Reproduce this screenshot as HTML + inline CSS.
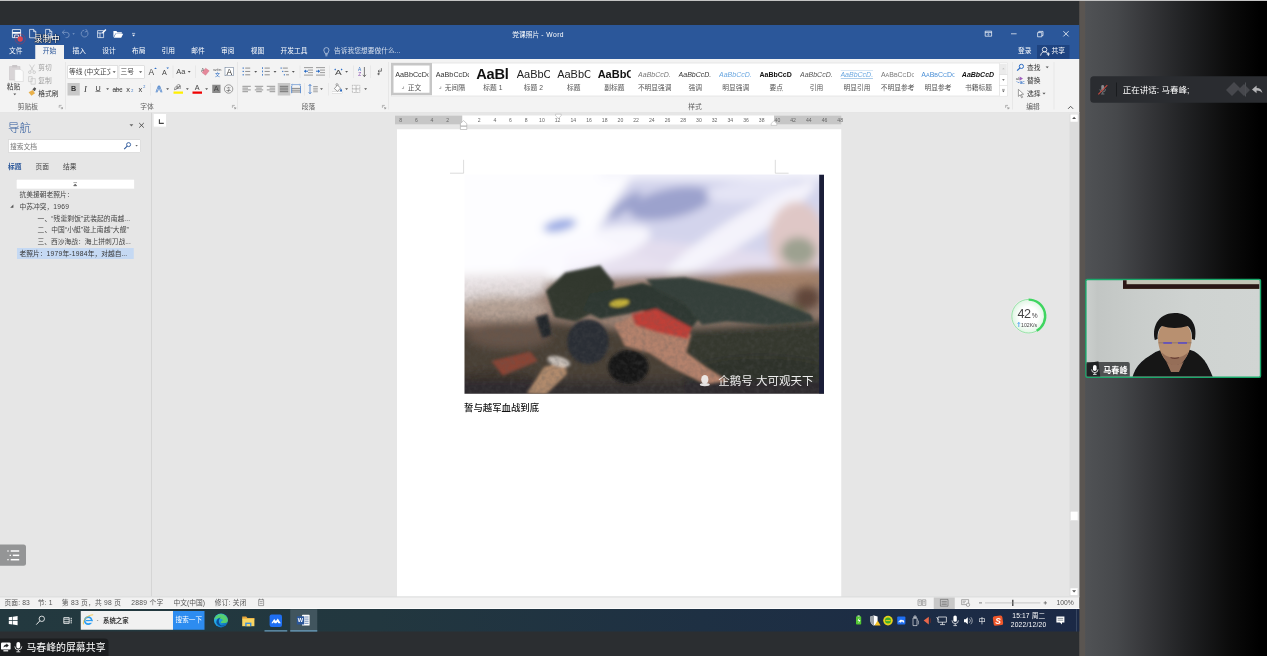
<!DOCTYPE html>
<html lang="zh-CN"><head><meta charset="utf-8"><title>Word</title>
<style>
html,body{margin:0;padding:0;background:#2b2e31;overflow:hidden}
body{width:1267px;height:656px;position:relative}
#s{position:absolute;left:0;top:0;width:5068px;height:2624px;transform:scale(0.25);transform-origin:0 0;overflow:hidden;font-family:"Liberation Sans","Noto Sans CJK SC",sans-serif;}
#s div{position:absolute;box-sizing:border-box}
#s .t{white-space:nowrap}
#s small{font-size:78%}
#s svg.ov{position:absolute;left:0;top:0;width:5068px;height:2624px}
svg text{font-family:"Liberation Sans","Noto Sans CJK SC",sans-serif}
</style></head><body><div id="s">
<div style="left:0px;top:0px;width:5068px;height:2624px;background:#2b2e31"></div>
<div style="left:4316.8px;top:0px;width:751.2px;height:2624px;background:linear-gradient(90deg,#5a5551 0,#5a5551 2.9%,#505255 3.4%,#46484b 20%,#38393c 34%,#212224 56%,#0b0b0b 80%,#000 96%)"></div>
<div style="left:0px;top:0px;width:5068px;height:4.4px;background:#c4c4c4"></div>
<div style="left:0px;top:100px;width:4316.8px;height:136px;background:#2b579a"></div>
<div style="left:0px;top:236px;width:4316.8px;height:218px;background:#f3f3f3"></div>
<div style="left:0px;top:449.2px;width:4316.8px;height:1938px;background:#e6e6e6"></div>
<div style="left:0px;top:447.6px;width:4316.8px;height:2.8px;background:#e0e0e0"></div>
<div style="left:0px;top:2384.8px;width:4316.8px;height:51.6px;background:#f2f2f2"></div>
<div style="left:0px;top:2384.8px;width:4316.8px;height:4.8px;background:#dedede"></div>
<div style="left:0px;top:2432px;width:4316.8px;height:4.2px;background:#fbfbfb"></div>
<div style="left:0px;top:2436px;width:4316.8px;height:90.4px;background:linear-gradient(90deg,#23393f 0,#22373f 35%,#1e3043 65%,#1b2946 100%)"></div>
<div style="left:1587.6px;top:517.2px;width:1777.6px;height:1868px;background:#fff"></div>
<div style="left:604px;top:451.2px;width:2.4px;height:1933.6px;background:#c4c4c4"></div>
<div style="left:140.6px;top:179.6px;width:115.4px;height:57.2px;background:#f3f3f3"></div>
<div class="t" style="left:36px;top:184.38px;font-size:26.96px;line-height:40.44px;color:#fff;">文件</div>
<div class="t" style="left:290px;top:184.38px;font-size:26.96px;line-height:40.44px;color:#fff;">插入</div>
<div class="t" style="left:409.2px;top:184.38px;font-size:26.96px;line-height:40.44px;color:#fff;">设计</div>
<div class="t" style="left:528px;top:184.38px;font-size:26.96px;line-height:40.44px;color:#fff;">布局</div>
<div class="t" style="left:646.4px;top:184.38px;font-size:26.96px;line-height:40.44px;color:#fff;">引用</div>
<div class="t" style="left:765.2px;top:184.38px;font-size:26.96px;line-height:40.44px;color:#fff;">邮件</div>
<div class="t" style="left:884px;top:184.38px;font-size:26.96px;line-height:40.44px;color:#fff;">审阅</div>
<div class="t" style="left:1003.2px;top:184.38px;font-size:26.96px;line-height:40.44px;color:#fff;">视图</div>
<div class="t" style="left:1122.4px;top:184.38px;font-size:26.96px;line-height:40.44px;color:#fff;">开发工具</div>
<div class="t" style="left:170.8px;top:184.38px;font-size:26.96px;line-height:40.44px;color:#2b579a;">开始</div>
<div class="t" style="left:1336px;top:184.38px;font-size:26.96px;line-height:40.44px;color:#d5deec;">告诉我您想要做什么...</div>
<div class="t" style="left:2049.2px;top:117.38px;font-size:26.96px;line-height:40.44px;color:#fff;">党课照片 <span style='letter-spacing:1.9px'>- Word</span></div>
<div class="t" style="left:4072px;top:184.38px;font-size:26.96px;line-height:40.44px;color:#fff;">登录</div>
<div style="left:4148px;top:180px;width:130.4px;height:55.2px;background:#1e4380"></div>
<div class="t" style="left:4206px;top:184.38px;font-size:26.96px;line-height:40.44px;color:#fff;">共享</div>
<div class="t" style="left:136px;top:131px;font-size:34.4px;line-height:51.6px;color:#fff;text-shadow:0 0 3px #000,0 0 5px rgba(0,0,0,.8),1px 1px 3px #000;">录制中</div>
<div class="t" style="left:27.2px;top:324.58px;font-size:26.96px;line-height:40.44px;color:#333;">粘贴</div>
<div class="t" style="left:153.2px;top:250.18px;font-size:26.96px;line-height:40.44px;color:#a0a0a0;">剪切</div>
<div class="t" style="left:153.2px;top:302.18px;font-size:26.96px;line-height:40.44px;color:#a0a0a0;">复制</div>
<div class="t" style="left:153.2px;top:353.78px;font-size:26.96px;line-height:40.44px;color:#333;">格式刷</div>
<div class="t" style="left:71.2px;top:404.98px;font-size:26.96px;line-height:40.44px;color:#5e5e5e;">剪贴板</div>
<div class="t" style="left:560.8px;top:404.98px;font-size:26.96px;line-height:40.44px;color:#5e5e5e;">字体</div>
<div class="t" style="left:1207.2px;top:404.98px;font-size:26.96px;line-height:40.44px;color:#5e5e5e;">段落</div>
<div class="t" style="left:2752.8px;top:404.98px;font-size:26.96px;line-height:40.44px;color:#5e5e5e;">样式</div>
<div class="t" style="left:4105.2px;top:404.98px;font-size:26.96px;line-height:40.44px;color:#5e5e5e;">编辑</div>
<div style="left:262.4px;top:248px;width:2px;height:190px;background:#dadada"></div>
<div style="left:950.4px;top:248px;width:2px;height:190px;background:#dadada"></div>
<div style="left:1552px;top:248px;width:2px;height:190px;background:#dadada"></div>
<div style="left:4048.8px;top:248px;width:2px;height:190px;background:#dadada"></div>
<div style="left:4215.2px;top:248px;width:2px;height:190px;background:#dadada"></div>
<div style="left:690.8px;top:262px;width:2px;height:50px;background:#dcdcdc"></div>
<div style="left:782px;top:262px;width:2px;height:50px;background:#dcdcdc"></div>
<div style="left:1198.8px;top:262px;width:2px;height:50px;background:#dcdcdc"></div>
<div style="left:1318px;top:262px;width:2px;height:50px;background:#dcdcdc"></div>
<div style="left:1413.2px;top:262px;width:2px;height:50px;background:#dcdcdc"></div>
<div style="left:1481.2px;top:262px;width:2px;height:50px;background:#dcdcdc"></div>
<div style="left:600px;top:332px;width:2px;height:50px;background:#dcdcdc"></div>
<div style="left:1218.4px;top:332px;width:2px;height:50px;background:#dcdcdc"></div>
<div style="left:1314px;top:332px;width:2px;height:50px;background:#dcdcdc"></div>
<div style="left:269.6px;top:262.4px;width:202.4px;height:51.2px;background:#fff;border:2px solid #c8c8c8"></div>
<div style="left:475.2px;top:262.4px;width:102.8px;height:51.2px;background:#fff;border:2px solid #c8c8c8"></div>
<div class="t" style="left:276px;top:266.4px;width:165.2px;height:44px;overflow:hidden;font-size:26.96px;line-height:42.4px;color:#444">等线 (中文正文)</div>
<div class="t" style="left:482px;top:267.38px;font-size:26.96px;line-height:40.44px;color:#444;">三号</div>
<div style="left:269.6px;top:332px;width:49.6px;height:50.4px;background:#c8c8c8"></div>
<div style="left:1111.2px;top:332px;width:49.6px;height:50.4px;background:#c8c8c8"></div>
<div class="t" style="left:294.4px;top:334.4px;font-size:28.8px;line-height:43.2px;color:#333;transform:translateX(-50%);font-weight:bold">B</div>
<div class="t" style="left:341.6px;top:330.2px;font-size:34.4px;line-height:51.6px;color:#333;transform:translateX(-50%);font-style:italic;font-family:'Liberation Serif',serif">I</div>
<div class="t" style="left:392px;top:333.2px;font-size:28.8px;line-height:43.2px;color:#333;transform:translateX(-50%);text-decoration:underline;text-underline-offset:2px">U</div>
<div class="t" style="left:469.2px;top:338px;font-size:25.6px;line-height:38.4px;color:#444;transform:translateX(-50%);text-decoration:line-through;letter-spacing:-1px">abc</div>
<div class="t" style="left:512.8px;top:333.8px;font-size:29.6px;line-height:44.4px;color:#333;transform:translateX(-50%);">x</div>
<div class="t" style="left:528.8px;top:353.4px;font-size:15.2px;line-height:22.8px;color:#2b6cc4;transform:translateX(-50%);">2</div>
<div class="t" style="left:561.6px;top:333.8px;font-size:29.6px;line-height:44.4px;color:#333;transform:translateX(-50%);">x</div>
<div class="t" style="left:577.6px;top:335px;font-size:15.2px;line-height:22.8px;color:#2b6cc4;transform:translateX(-50%);">2</div>
<div class="t" style="left:605.2px;top:263.2px;font-size:33.6px;line-height:50.4px;color:#444;transform:translateX(-50%);">A</div>
<div class="t" style="left:657.6px;top:268.4px;font-size:28.8px;line-height:43.2px;color:#444;transform:translateX(-50%);">A</div>
<div class="t" style="left:705.2px;top:264.6px;font-size:29.6px;line-height:44.4px;color:#444;">Aa</div>
<div class="t" style="left:4108px;top:250.58px;font-size:26.96px;line-height:40.44px;color:#333;">查找</div>
<div class="t" style="left:4108px;top:303.38px;font-size:26.96px;line-height:40.44px;color:#333;">替换</div>
<div class="t" style="left:4108px;top:354.58px;font-size:26.96px;line-height:40.44px;color:#333;">选择</div>
<div class="t" style="left:636px;top:329px;font-size:36px;line-height:54px;color:#f3f3f3;transform:translateX(-50%);-webkit-text-stroke:2.4px #3b78c8;font-weight:bold">A</div>
<div style="left:694.4px;top:366.4px;width:37.6px;height:8.8px;background:#ffef00"></div>
<div class="t" style="left:714.4px;top:335.8px;font-size:18.4px;line-height:27.6px;color:#555;transform:translateX(-50%);font-style:italic">ab</div>
<div class="t" style="left:788.8px;top:328.8px;font-size:28.8px;line-height:43.2px;color:#444;transform:translateX(-50%);">A</div>
<div style="left:770.4px;top:366.4px;width:37.6px;height:8.8px;background:#f00000"></div>
<div style="left:848.8px;top:339.2px;width:32.8px;height:32.8px;background:#8a8a8a"></div>
<div class="t" style="left:865.2px;top:333.4px;font-size:29.6px;line-height:44.4px;color:#444;transform:translateX(-50%);">A</div>
<div class="t" style="left:914.4px;top:341px;font-size:20px;line-height:30px;color:#444;transform:translateX(-50%);">字</div>
<div class="t" style="left:811.2px;top:264.8px;font-size:20.8px;line-height:31.2px;color:#555;transform:translateX(-50%);">A</div>
<div class="t" style="left:869.6px;top:281.8px;font-size:20px;line-height:30px;color:#2b6cc4;transform:translateX(-50%);">文</div>
<div class="t" style="left:869.6px;top:263.2px;font-size:17.6px;line-height:26.4px;color:#555;transform:translateX(-50%);">wén</div>
<div style="left:899.2px;top:268.8px;width:35.2px;height:35.2px;border:2px solid #5a6f8a;background:#fff"></div>
<div class="t" style="left:916.8px;top:262.4px;font-size:33.6px;line-height:50.4px;color:#333;transform:translateX(-50%);">A</div>
<div class="t" style="left:1353.2px;top:267px;font-size:29.6px;line-height:44.4px;color:#444;transform:translateX(-50%);transform:translateX(-50%) scaleX(1.35)">A</div>
<div class="t" style="left:1438.4px;top:262.8px;font-size:19.2px;line-height:28.8px;color:#2b6cc4;transform:translateX(-50%);">A</div>
<div class="t" style="left:1438.4px;top:282.8px;font-size:19.2px;line-height:28.8px;color:#8a4fb0;transform:translateX(-50%);">Z</div>
<div style="left:1330.4px;top:367.2px;width:38.4px;height:8px;background:#fff;border:1.6px solid #999"></div>
<div style="left:1564.8px;top:251.2px;width:2465.6px;height:133.6px;background:#fff;border:2px solid #d0d0d0"></div>
<div style="left:1564.4px;top:252.4px;width:163.6px;height:128.4px;border:10.8px solid #c6c6c6;background:#fff"></div>
<div class="t" style="left:1581.2px;top:267.2px;width:132.8px;height:64px;overflow:hidden;font-size:28.8px;line-height:64px;color:#333;;font-family:"Liberation Sans",sans-serif">AaBbCcDc</div>
<div class="t" style="left:1657.73px;top:330.58px;font-size:26.96px;line-height:40.44px;color:#555;transform:translateX(-50%);">正文</div>
<div class="t" style="left:1743.07px;top:267.2px;width:132.8px;height:64px;overflow:hidden;font-size:28.8px;line-height:64px;color:#333;;font-family:"Liberation Sans",sans-serif">AaBbCcDc</div>
<div class="t" style="left:1819.6px;top:330.58px;font-size:26.96px;line-height:40.44px;color:#555;transform:translateX(-50%);">无间隔</div>
<div class="t" style="left:1904.93px;top:261.6px;width:132.8px;height:64px;overflow:hidden;font-size:58.4px;line-height:64px;color:#111;font-weight:bold;letter-spacing:-1px;font-family:"Liberation Sans",sans-serif">AaBl</div>
<div class="t" style="left:1971.47px;top:330.58px;font-size:26.96px;line-height:40.44px;color:#555;transform:translateX(-50%);">标题 1</div>
<div class="t" style="left:2066.8px;top:264.8px;width:132.8px;height:64px;overflow:hidden;font-size:44px;line-height:64px;color:#222;;font-family:"Liberation Sans",sans-serif">AaBbC</div>
<div class="t" style="left:2133.33px;top:330.58px;font-size:26.96px;line-height:40.44px;color:#555;transform:translateX(-50%);">标题 2</div>
<div class="t" style="left:2228.67px;top:264.8px;width:132.8px;height:64px;overflow:hidden;font-size:44px;line-height:64px;color:#222;;font-family:"Liberation Sans",sans-serif">AaBbC</div>
<div class="t" style="left:2295.2px;top:330.58px;font-size:26.96px;line-height:40.44px;color:#555;transform:translateX(-50%);">标题</div>
<div class="t" style="left:2390.53px;top:264.8px;width:132.8px;height:64px;overflow:hidden;font-size:44px;line-height:64px;color:#111;font-weight:bold;font-family:"Liberation Sans",sans-serif">AaBbC</div>
<div class="t" style="left:2457.07px;top:330.58px;font-size:26.96px;line-height:40.44px;color:#555;transform:translateX(-50%);">副标题</div>
<div class="t" style="left:2552.4px;top:267.2px;width:132.8px;height:64px;overflow:hidden;font-size:28px;line-height:64px;color:#777;font-style:italic;font-family:"Liberation Sans",sans-serif">AaBbCcD.</div>
<div class="t" style="left:2618.93px;top:330.58px;font-size:26.96px;line-height:40.44px;color:#555;transform:translateX(-50%);">不明显强调</div>
<div class="t" style="left:2714.27px;top:267.2px;width:132.8px;height:64px;overflow:hidden;font-size:28px;line-height:64px;color:#333;font-style:italic;font-family:"Liberation Sans",sans-serif">AaBbCcD.</div>
<div class="t" style="left:2780.8px;top:330.58px;font-size:26.96px;line-height:40.44px;color:#555;transform:translateX(-50%);">强调</div>
<div class="t" style="left:2876.13px;top:267.2px;width:132.8px;height:64px;overflow:hidden;font-size:28px;line-height:64px;color:#6aa7e0;font-style:italic;font-family:"Liberation Sans",sans-serif">AaBbCcD.</div>
<div class="t" style="left:2942.67px;top:330.58px;font-size:26.96px;line-height:40.44px;color:#555;transform:translateX(-50%);">明显强调</div>
<div class="t" style="left:3038px;top:267.2px;width:132.8px;height:64px;overflow:hidden;font-size:28px;line-height:64px;color:#111;font-weight:bold;font-family:"Liberation Sans",sans-serif">AaBbCcD</div>
<div class="t" style="left:3104.53px;top:330.58px;font-size:26.96px;line-height:40.44px;color:#555;transform:translateX(-50%);">要点</div>
<div class="t" style="left:3199.87px;top:267.2px;width:132.8px;height:64px;overflow:hidden;font-size:28px;line-height:64px;color:#555;font-style:italic;font-family:"Liberation Sans",sans-serif">AaBbCcD.</div>
<div class="t" style="left:3266.4px;top:330.58px;font-size:26.96px;line-height:40.44px;color:#555;transform:translateX(-50%);">引用</div>
<div class="t" style="left:3361.73px;top:267.2px;width:132.8px;height:64px;overflow:hidden;font-size:28px;line-height:64px;color:#6aa7e0;font-style:italic;font-family:"Liberation Sans",sans-serif">AaBbCcD.</div>
<div class="t" style="left:3428.27px;top:330.58px;font-size:26.96px;line-height:40.44px;color:#555;transform:translateX(-50%);">明显引用</div>
<div class="t" style="left:3523.6px;top:267.2px;width:132.8px;height:64px;overflow:hidden;font-size:28px;line-height:64px;color:#777;;font-family:"Liberation Sans",sans-serif">A<small>A</small>B<small>B</small>C<small>C</small>D<small>C</small></div>
<div class="t" style="left:3590.13px;top:330.58px;font-size:26.96px;line-height:40.44px;color:#555;transform:translateX(-50%);">不明显参考</div>
<div class="t" style="left:3685.47px;top:267.2px;width:132.8px;height:64px;overflow:hidden;font-size:28px;line-height:64px;color:#4a8fd6;;font-family:"Liberation Sans",sans-serif">A<small>A</small>B<small>B</small>C<small>C</small>D<small>C</small></div>
<div class="t" style="left:3752px;top:330.58px;font-size:26.96px;line-height:40.44px;color:#555;transform:translateX(-50%);">明显参考</div>
<div class="t" style="left:3847.33px;top:267.2px;width:132.8px;height:64px;overflow:hidden;font-size:28px;line-height:64px;color:#111;font-weight:bold;font-style:italic;font-family:"Liberation Sans",sans-serif">AaBbCcD</div>
<div class="t" style="left:3913.87px;top:330.58px;font-size:26.96px;line-height:40.44px;color:#555;transform:translateX(-50%);">书籍标题</div>
<div style="left:3362.53px;top:280.8px;width:129.87px;height:1.6px;background:#5b9bd5"></div>
<div style="left:3362.53px;top:314.4px;width:129.87px;height:1.6px;background:#5b9bd5"></div>
<div style="left:3996.8px;top:252.8px;width:32px;height:130.4px;background:#fff;border-left:2px solid #d0d0d0"></div>
<div style="left:3999.2px;top:255.2px;width:28px;height:42.4px;background:#ebebeb"></div>
<div style="left:3996.8px;top:297.6px;width:32px;height:2px;background:#d0d0d0"></div>
<div style="left:3996.8px;top:340.8px;width:32px;height:2px;background:#d0d0d0"></div>
<div class="t" style="left:4072.8px;top:302px;font-size:17.6px;line-height:26.4px;color:#555;transform:translateX(-50%);">ab</div>
<div class="t" style="left:4088.8px;top:317.4px;font-size:18.4px;line-height:27.6px;color:#2b6cc4;transform:translateX(-50%);">ac</div>
<div style="left:1580.4px;top:461.6px;width:1786px;height:36.8px;background:#fff"></div>
<div style="left:1580.4px;top:461.6px;width:268.4px;height:36.8px;background:#c6c6c6"></div>
<div style="left:3096px;top:461.6px;width:270.4px;height:36.8px;background:#c6c6c6"></div>
<div class="t" style="left:1602.4px;top:465.5px;font-size:20.4px;line-height:30.6px;color:#666;transform:translateX(-50%);">8</div>
<div class="t" style="left:1665.2px;top:465.5px;font-size:20.4px;line-height:30.6px;color:#666;transform:translateX(-50%);">6</div>
<div class="t" style="left:1728px;top:465.5px;font-size:20.4px;line-height:30.6px;color:#666;transform:translateX(-50%);">4</div>
<div class="t" style="left:1790.8px;top:465.5px;font-size:20.4px;line-height:30.6px;color:#666;transform:translateX(-50%);">2</div>
<div class="t" style="left:1916.4px;top:465.5px;font-size:20.4px;line-height:30.6px;color:#666;transform:translateX(-50%);">2</div>
<div class="t" style="left:1979.2px;top:465.5px;font-size:20.4px;line-height:30.6px;color:#666;transform:translateX(-50%);">4</div>
<div class="t" style="left:2042px;top:465.5px;font-size:20.4px;line-height:30.6px;color:#666;transform:translateX(-50%);">6</div>
<div class="t" style="left:2104.8px;top:465.5px;font-size:20.4px;line-height:30.6px;color:#666;transform:translateX(-50%);">8</div>
<div class="t" style="left:2167.6px;top:465.5px;font-size:20.4px;line-height:30.6px;color:#666;transform:translateX(-50%);">10</div>
<div class="t" style="left:2230.4px;top:465.5px;font-size:20.4px;line-height:30.6px;color:#666;transform:translateX(-50%);">12</div>
<div class="t" style="left:2293.2px;top:465.5px;font-size:20.4px;line-height:30.6px;color:#666;transform:translateX(-50%);">14</div>
<div class="t" style="left:2356px;top:465.5px;font-size:20.4px;line-height:30.6px;color:#666;transform:translateX(-50%);">16</div>
<div class="t" style="left:2418.8px;top:465.5px;font-size:20.4px;line-height:30.6px;color:#666;transform:translateX(-50%);">18</div>
<div class="t" style="left:2481.6px;top:465.5px;font-size:20.4px;line-height:30.6px;color:#666;transform:translateX(-50%);">20</div>
<div class="t" style="left:2544.4px;top:465.5px;font-size:20.4px;line-height:30.6px;color:#666;transform:translateX(-50%);">22</div>
<div class="t" style="left:2607.2px;top:465.5px;font-size:20.4px;line-height:30.6px;color:#666;transform:translateX(-50%);">24</div>
<div class="t" style="left:2670px;top:465.5px;font-size:20.4px;line-height:30.6px;color:#666;transform:translateX(-50%);">26</div>
<div class="t" style="left:2732.8px;top:465.5px;font-size:20.4px;line-height:30.6px;color:#666;transform:translateX(-50%);">28</div>
<div class="t" style="left:2795.6px;top:465.5px;font-size:20.4px;line-height:30.6px;color:#666;transform:translateX(-50%);">30</div>
<div class="t" style="left:2858.4px;top:465.5px;font-size:20.4px;line-height:30.6px;color:#666;transform:translateX(-50%);">32</div>
<div class="t" style="left:2921.2px;top:465.5px;font-size:20.4px;line-height:30.6px;color:#666;transform:translateX(-50%);">34</div>
<div class="t" style="left:2984px;top:465.5px;font-size:20.4px;line-height:30.6px;color:#666;transform:translateX(-50%);">36</div>
<div class="t" style="left:3046.8px;top:465.5px;font-size:20.4px;line-height:30.6px;color:#666;transform:translateX(-50%);">38</div>
<div class="t" style="left:3109.6px;top:465.5px;font-size:20.4px;line-height:30.6px;color:#666;transform:translateX(-50%);">40</div>
<div class="t" style="left:3172.4px;top:465.5px;font-size:20.4px;line-height:30.6px;color:#666;transform:translateX(-50%);">42</div>
<div class="t" style="left:3235.2px;top:465.5px;font-size:20.4px;line-height:30.6px;color:#666;transform:translateX(-50%);">44</div>
<div class="t" style="left:3298px;top:465.5px;font-size:20.4px;line-height:30.6px;color:#666;transform:translateX(-50%);">46</div>
<div class="t" style="left:3360.8px;top:465.5px;font-size:20.4px;line-height:30.6px;color:#666;transform:translateX(-50%);">48</div>
<div style="left:612px;top:454px;width:53.6px;height:55.2px;background:#fff;border:2px solid #dcdcdc"></div>
<div class="t" style="left:32px;top:477px;font-size:45.6px;line-height:68.4px;color:#2b579a;font-weight:300">导航</div>
<div style="left:32.8px;top:557.6px;width:530.4px;height:53.6px;background:#fff;border:2px solid #c6c6c6"></div>
<div class="t" style="left:40px;top:564.58px;font-size:26.96px;line-height:40.44px;color:#777;">搜索文档</div>
<div class="t" style="left:32px;top:647.38px;font-size:26.96px;line-height:40.44px;color:#2b579a;font-weight:bold">标题</div>
<div class="t" style="left:142.4px;top:647.38px;font-size:26.96px;line-height:40.44px;color:#444;">页面</div>
<div class="t" style="left:252px;top:647.38px;font-size:26.96px;line-height:40.44px;color:#444;">结果</div>
<div style="left:66.4px;top:718.4px;width:470.4px;height:37.6px;background:#fff;border:1.5px solid #dedede"></div>
<div style="left:68px;top:992px;width:467.2px;height:44px;background:#c5d9f3"></div>
<div class="t" style="left:78.4px;top:758.18px;font-size:26.96px;line-height:40.44px;color:#444;">抗美援朝老照片：</div>
<div class="t" style="left:78.4px;top:804.98px;font-size:26.96px;line-height:40.44px;color:#444;">中苏冲突，<span style='letter-spacing:1px'>1969</span></div>
<div class="t" style="left:150.4px;top:852.58px;font-size:26.96px;line-height:40.44px;color:#444;letter-spacing:0.4px">一、“残羹剩饭”武装起的南越...</div>
<div class="t" style="left:150.4px;top:899.38px;font-size:26.96px;line-height:40.44px;color:#444;letter-spacing:0.35px">二、中国“小艇”碰上南越“大舰”</div>
<div class="t" style="left:150.4px;top:946.18px;font-size:26.96px;line-height:40.44px;color:#444;">三、西沙海战：海上拼刺刀战...</div>
<div class="t" style="left:78.4px;top:994.18px;font-size:26.96px;line-height:40.44px;color:#333;">老照片：<span style='letter-spacing:1px'>1979</span>年<span style='letter-spacing:1px'>-1984</span>年，对越自...</div>
<div style="left:-16px;top:2177.6px;width:120.4px;height:85.6px;background:#949596;border-radius:10px"></div>
<div style="left:4277.6px;top:456px;width:39.2px;height:1928.8px;background:#dcdcdc"></div>
<div style="left:4280.8px;top:456.8px;width:31.2px;height:31.2px;background:#fff;border:1px solid #d8d8d8"></div>
<div style="left:4281.2px;top:2352px;width:30px;height:28.8px;background:#fff;border:1px solid #d8d8d8"></div>
<div style="left:4280px;top:2044px;width:32.8px;height:39.2px;background:#fff;border:2.4px solid #d4d4d4"></div>
<div class="t" style="left:17.6px;top:2389.38px;font-size:26.96px;line-height:40.44px;color:#555;letter-spacing:0.6px">页面: 83</div>
<div class="t" style="left:151.2px;top:2389.38px;font-size:26.96px;line-height:40.44px;color:#555;letter-spacing:0.6px">节: 1</div>
<div class="t" style="left:247.2px;top:2389.38px;font-size:26.96px;line-height:40.44px;color:#555;letter-spacing:1px">第 83 页，共 98 页</div>
<div class="t" style="left:524.8px;top:2389.38px;font-size:26.96px;line-height:40.44px;color:#555;letter-spacing:1.1px">2889 个字</div>
<div class="t" style="left:694.4px;top:2389.38px;font-size:26.96px;line-height:40.44px;color:#555;">中文(中国)</div>
<div class="t" style="left:859.2px;top:2389.38px;font-size:26.96px;line-height:40.44px;color:#555;letter-spacing:0.7px">修订: 关闭</div>
<div style="left:3735.2px;top:2390.4px;width:84px;height:45.6px;background:#c8c8c8"></div>
<div style="left:4047.6px;top:2399.2px;width:6.8px;height:24.8px;background:#555"></div>
<div class="t" style="left:4226.4px;top:2390.58px;font-size:26.96px;line-height:40.44px;color:#555;">100%</div>
<div style="left:323.2px;top:2444px;width:368.8px;height:75.2px;background:#f1f1f1"></div>
<div style="left:692px;top:2444px;width:126.4px;height:75.2px;background:#2d8cf0"></div>
<div class="t" style="left:702.4px;top:2461.4px;font-size:26.4px;line-height:39.6px;color:#fff;">搜索一下</div>
<div class="t" style="left:412px;top:2462px;font-size:25.6px;line-height:38.4px;color:#333;font-weight:bold">系统之家</div>
<div style="left:1058.4px;top:2521.2px;width:90.4px;height:5.2px;background:#6b9dbd"></div>
<div style="left:1160.8px;top:2436.8px;width:108px;height:89.6px;background:#41555e"></div>
<div style="left:1160.8px;top:2521.2px;width:108px;height:5.2px;background:#6b9dbd"></div>
<div class="t" style="left:3928px;top:2461px;font-size:28px;line-height:42px;color:#fff;transform:translateX(-50%);">中</div>
<div class="t" style="left:4115.2px;top:2440.7px;font-size:26.8px;line-height:40.2px;color:#fff;transform:translateX(-50%);letter-spacing:0.5px">15:17 周二</div>
<div class="t" style="left:4114.4px;top:2478.3px;font-size:26.8px;line-height:40.2px;color:#fff;transform:translateX(-50%);letter-spacing:0.9px">2022/12/20</div>
<div style="left:4306.4px;top:2436.8px;width:2px;height:89.6px;background:#55647a"></div>
<div style="left:0px;top:2553.6px;width:434.4px;height:72px;background:#1b1d1f;border-radius:0 16px 0 0"></div>
<div class="t" style="left:105.6px;top:2559.9px;font-size:39.6px;line-height:59.4px;color:#fff;">马春峰的屏幕共享</div>
<div class="t" style="left:1856px;top:1601.8px;font-size:37.6px;line-height:56.4px;color:#111;font-weight:500">誓与越军血战到底</div>
<div style="left:4360.8px;top:305.2px;width:720px;height:106px;background:#2a2c30;border-radius:14px 0 0 14px"></div>
<div style="left:4464px;top:329.6px;width:2.8px;height:56.8px;background:#151618"></div>
<div class="t" style="left:4491.2px;top:333.7px;font-size:34px;line-height:51px;color:#fff;">正在讲话: 马春峰;</div>
<div style="left:4980.8px;top:329.6px;width:2.8px;height:56.8px;background:#5a5c60"></div>
<svg class="ov" viewBox="0 0 1267 656">
<path d="M112.64 71.30h3.12l-1.56 1.7999999999999998z" fill="#555"/>
<path d="M139.04 71.30h3.12l-1.56 1.7999999999999998z" fill="#555"/>
<path d="M187.76 71.06h2.88l-1.44 1.68z" fill="#555"/>
<path d="M254.26 71.06h2.88l-1.44 1.68z" fill="#555"/>
<path d="M273.56 71.06h2.88l-1.44 1.68z" fill="#555"/>
<path d="M291.86 71.06h2.88l-1.44 1.68z" fill="#555"/>
<path d="M345.16 71.06h2.88l-1.44 1.68z" fill="#555"/>
<path d="M106.16 88.36h2.88l-1.44 1.68z" fill="#555"/>
<path d="M166.16 88.36h2.88l-1.44 1.68z" fill="#555"/>
<path d="M185.96 88.36h2.88l-1.44 1.68z" fill="#555"/>
<path d="M205.16 88.36h2.88l-1.44 1.68z" fill="#555"/>
<path d="M320.06 88.36h2.88l-1.44 1.68z" fill="#555"/>
<path d="M345.16 88.36h2.88l-1.44 1.68z" fill="#555"/>
<path d="M364.16 88.36h2.88l-1.44 1.68z" fill="#555"/>
<path d="M13.36 93.46h2.88l-1.44 1.68z" fill="#555"/>
<path d="M1045.64 66.50h3.12l-1.56 1.7999999999999998z" fill="#555"/>
<path d="M1042.44 92.70h3.12l-1.56 1.7999999999999998z" fill="#555"/>
<path d="M59.2 107.80000000000001V105.4H61.6" stroke="#777" fill="none" stroke-width="0.5" />
<path d="M60.5 106.7L62.400000000000006 108.60000000000001M62.5 107.0V108.7H60.800000000000004" stroke="#777" fill="none" stroke-width="0.5" />
<path d="M232.4 107.80000000000001V105.4H234.8" stroke="#777" fill="none" stroke-width="0.5" />
<path d="M233.70000000000002 106.7L235.6 108.60000000000001M235.70000000000002 107.0V108.7H234.0" stroke="#777" fill="none" stroke-width="0.5" />
<path d="M382.4 107.80000000000001V105.4H384.79999999999995" stroke="#777" fill="none" stroke-width="0.5" />
<path d="M383.7 106.7L385.59999999999997 108.60000000000001M385.7 107.0V108.7H384.0" stroke="#777" fill="none" stroke-width="0.5" />
<path d="M1005.6 107.80000000000001V105.4H1008.0" stroke="#777" fill="none" stroke-width="0.5" />
<path d="M1006.9 106.7L1008.8000000000001 108.60000000000001M1008.9 107.0V108.7H1007.2" stroke="#777" fill="none" stroke-width="0.5" />
<path d="M1068.1 108.8l2.5-2.500l2.500 2.500" stroke="#555" fill="none" stroke-width="1" />
<path d="M154.2 68.9l1.3-1.5l1.3 1.5z" stroke="none" fill="#2b6cc4" stroke-width="0.6" />
<path d="M166.4 67.6l1.3 1.5l1.3-1.5z" stroke="none" fill="#2b6cc4" stroke-width="0.6" />
<path d="M9.5 66.5h10.5v13.5h-10.5z" stroke="#c5c0c2" fill="#d8d4d6" stroke-width="0.5" />
<path d="M12.2 65h5v2.4h-5z" stroke="none" fill="#c9c5c7" stroke-width="0.6" />
<path d="M14.7 69.5h6.3l2.3 2.3v9.7h-8.6z" stroke="#cfcfcf" fill="#fbfbfb" stroke-width="0.5" />
<path d="M29.5 64.6l4 6.4M34.5 64.6l-4 6.4" stroke="#b8b8b8" fill="none" stroke-width="0.6" />
<circle cx="29.8" cy="72.2" r="1.3" fill="none" stroke="#b8b8b8" stroke-width="0.6"/><circle cx="34.2" cy="72.2" r="1.3" fill="none" stroke="#b8b8b8" stroke-width="0.6"/>
<path d="M28.6 76.6h3.6v5h-3.6zM31 78.6h4.3v5.6h-4.3z" stroke="#b8b8b8" fill="#f3f3f3" stroke-width="0.5" />
<path d="M28.6 92.2l4.2-2.2l2.2 3.2l-3.6 2.6z" stroke="none" fill="#e8b04a" stroke-width="0.6" />
<path d="M32.4 89.6l2-2.4l1.8 1.4l-1.4 2.6z" stroke="none" fill="#555" stroke-width="0.6" />
<path d="M175 87.6l3.6-3.6l1.6 1.6l-3.6 3.6l-2.2.6z" stroke="#555" fill="none" stroke-width="0.6" />
<circle cx="228.6" cy="89" r="4.2" fill="none" stroke="#555" stroke-width="0.55"/>
<path d="M202 72.6l3.6-4.4l3.6 2.6l-3.6 4.4z" stroke="#c96a7e" fill="#e5889a" stroke-width="0.4" />
<rect x="242.6" y="67.5" width="1.2" height="1.2" fill="#2b6cc4"/>
<path d="M245.2 68.1L250.2 68.1" stroke="#666" stroke-width="0.7" fill="none"/>
<rect x="242.6" y="70.85" width="1.2" height="1.2" fill="#2b6cc4"/>
<path d="M245.2 71.44999999999999L250.2 71.44999999999999" stroke="#666" stroke-width="0.7" fill="none"/>
<rect x="242.6" y="74.2" width="1.2" height="1.2" fill="#2b6cc4"/>
<path d="M245.2 74.8L250.2 74.8" stroke="#666" stroke-width="0.7" fill="none"/>
<rect x="262.2" y="67.19999999999999" width="0.8" height="1.8" fill="#2b6cc4"/>
<path d="M264.6 68.1L269.8 68.1" stroke="#666" stroke-width="0.7" fill="none"/>
<rect x="262.2" y="70.54999999999998" width="0.8" height="1.8" fill="#2b6cc4"/>
<path d="M264.6 71.44999999999999L269.8 71.44999999999999" stroke="#666" stroke-width="0.7" fill="none"/>
<rect x="262.2" y="73.89999999999999" width="0.8" height="1.8" fill="#2b6cc4"/>
<path d="M264.6 74.8L269.8 74.8" stroke="#666" stroke-width="0.7" fill="none"/>
<rect x="280.6" y="67.5" width="1.1" height="1.2" fill="#2b6cc4"/>
<path d="M282.8 68.1L287.8 68.1" stroke="#666" stroke-width="0.7" fill="none"/>
<rect x="282.20000000000005" y="70.85" width="1.1" height="1.2" fill="#2b6cc4"/>
<path d="M284.40000000000003 71.44999999999999L288.40000000000003 71.44999999999999" stroke="#666" stroke-width="0.7" fill="none"/>
<rect x="283.8" y="74.2" width="1.1" height="1.2" fill="#2b6cc4"/>
<path d="M286.0 74.8L289.0 74.8" stroke="#666" stroke-width="0.7" fill="none"/>
<path d="M304 67.6L313 67.6" stroke="#777" stroke-width="0.7" fill="none"/>
<path d="M308 70.1L313 70.1" stroke="#777" stroke-width="0.7" fill="none"/>
<path d="M308 72.6L313 72.6" stroke="#777" stroke-width="0.7" fill="none"/>
<path d="M304 75.1L313 75.1" stroke="#777" stroke-width="0.7" fill="none"/>
<path d="M308 71.2h-3.6" stroke="#2b6cc4" fill="none" stroke-width="1.0" />
<path d="M306 69.4l-2 1.8l2 1.8z" stroke="none" fill="#2b6cc4" stroke-width="0.6" />
<path d="M316 67.6L325 67.6" stroke="#777" stroke-width="0.7" fill="none"/>
<path d="M320 70.1L325 70.1" stroke="#777" stroke-width="0.7" fill="none"/>
<path d="M320 72.6L325 72.6" stroke="#777" stroke-width="0.7" fill="none"/>
<path d="M316 75.1L325 75.1" stroke="#777" stroke-width="0.7" fill="none"/>
<path d="M316 71.2h3.6" stroke="#2b6cc4" fill="none" stroke-width="1.0" />
<path d="M318 69.4l2 1.8l-2 1.8z" stroke="none" fill="#2b6cc4" stroke-width="0.6" />
<path d="M335.2 68.4l.9 1.100l-.900 1.100l-.900-1.100zM341.600 68.400l.900 1.100l-.900 1.100l-.900-1.100z" stroke="none" fill="#2b6cc4" stroke-width="0.6" />
<path d="M364.4 67v9.4M362.8 74.8l1.6 1.8l1.6-1.8" stroke="#444" fill="none" stroke-width="0.7" />
<path d="M381.400 68.200v3h-3.200M379.400 70l-1.400 1.200l1.400 1.200" stroke="#444" fill="none" stroke-width="0.7" />
<path d="M378.600 72.600v2.600M377.300 73.900h2.600" stroke="#444" fill="none" stroke-width="0.7" />
<path d="M242.4 86.3L250.8 86.3" stroke="#777" stroke-width="0.75" fill="none"/>
<path d="M242.4 88.1L248.0 88.1" stroke="#777" stroke-width="0.75" fill="none"/>
<path d="M242.4 89.89999999999999L250.8 89.89999999999999" stroke="#777" stroke-width="0.75" fill="none"/>
<path d="M242.4 91.7L248.0 91.7" stroke="#777" stroke-width="0.75" fill="none"/>
<path d="M254.8 86.3L263.2 86.3" stroke="#777" stroke-width="0.75" fill="none"/>
<path d="M256.2 88.1L261.8 88.1" stroke="#777" stroke-width="0.75" fill="none"/>
<path d="M254.8 89.89999999999999L263.2 89.89999999999999" stroke="#777" stroke-width="0.75" fill="none"/>
<path d="M256.2 91.7L261.8 91.7" stroke="#777" stroke-width="0.75" fill="none"/>
<path d="M266.8 86.3L275.2 86.3" stroke="#777" stroke-width="0.75" fill="none"/>
<path d="M269.59999999999997 88.1L275.2 88.1" stroke="#777" stroke-width="0.75" fill="none"/>
<path d="M266.8 89.89999999999999L275.2 89.89999999999999" stroke="#777" stroke-width="0.75" fill="none"/>
<path d="M269.59999999999997 91.7L275.2 91.7" stroke="#777" stroke-width="0.75" fill="none"/>
<path d="M279.8 86.3L288.2 86.3" stroke="#555" stroke-width="0.75" fill="none"/>
<path d="M279.8 88.1L288.2 88.1" stroke="#555" stroke-width="0.75" fill="none"/>
<path d="M279.8 89.89999999999999L288.2 89.89999999999999" stroke="#555" stroke-width="0.75" fill="none"/>
<path d="M279.8 91.7L288.2 91.7" stroke="#555" stroke-width="0.75" fill="none"/>
<path d="M291.8 88.4L300.2 88.4" stroke="#666" stroke-width="0.75" fill="none"/>
<path d="M291.8 90.2L300.2 90.2" stroke="#666" stroke-width="0.75" fill="none"/>
<path d="M291.8 92.0L300.2 92.0" stroke="#666" stroke-width="0.75" fill="none"/>
<path d="M291.8 84.6h8.4M292.4 83.8l-0.8 0.8l0.8 0.8M299.6 83.8l0.8 0.8l-0.8 0.8" stroke="#2b6cc4" fill="none" stroke-width="0.5" />
<rect x="291.4" y="85.6" width="0.7" height="7.6" fill="#2b6cc4"/><rect x="300" y="85.6" width="0.7" height="7.6" fill="#2b6cc4"/>
<path d="M313.2 86.5L317.8 86.5" stroke="#8a8a8a" stroke-width="0.75" fill="none"/>
<path d="M313.2 88.25L317.8 88.25" stroke="#8a8a8a" stroke-width="0.75" fill="none"/>
<path d="M313.2 90.0L317.8 90.0" stroke="#8a8a8a" stroke-width="0.75" fill="none"/>
<path d="M313.2 91.75L317.8 91.75" stroke="#8a8a8a" stroke-width="0.75" fill="none"/>
<path d="M310 84.6v9M308.6 86l1.4-1.6l1.4 1.6M308.6 92.2l1.4 1.6l1.4-1.6" stroke="#2b6cc4" fill="none" stroke-width="0.7" />
<path d="M334.4 88.6l3-3.4l3.2 2.8l-3 3.4z" stroke="#555" fill="#fdfdfd" stroke-width="0.55" />
<path d="M336.6 86l-0.6-1.6a1 1 0 0 1 1.8-.4l.6 1.4" stroke="#555" fill="none" stroke-width="0.5" />
<path d="M341 88.4c.9 1.2 1.1 1.8 1.1 2.2a1 1 0 0 1-2.1 0c0-.5.3-1.1 1-2.2z" stroke="none" fill="#2b6cc4" stroke-width="0.6" />
<rect x="352.4" y="85.300" width="7.400" height="7.200" fill="#f8f8f8" stroke="#909090" stroke-width="0.550" stroke-dasharray="1 0.500"/>
<path d="M352.400 88.900h7.400M356.100 85.300v7.200" stroke="#909090" fill="none" stroke-width="0.55" />
<path d="M403.53333333333336 86.5v2h-1.6" stroke="#666" fill="none" stroke-width="0.5" />
<path d="M440.79999999999995 86.5v2h-1.6" stroke="#666" fill="none" stroke-width="0.5" />
<path d="M1002.20 69.32h2.4l-1.20 -1.44z" fill="#bbb"/>
<path d="M1002.08 79.22h2.64l-1.32 1.56z" fill="#555"/>
<path d="M1002.08 90.62h2.64l-1.32 1.56z" fill="#555"/>
<path d="M1002.0 89.4L1004.8 89.4" stroke="#555" stroke-width="0.5" fill="none"/>
<circle cx="1021.400" cy="66.400" r="2.100" fill="none" stroke="#2b6cc4" stroke-width="1"/>
<path d="M1019.900 68l-2.800 2.600" stroke="#2b6cc4" fill="none" stroke-width="1.2" />
<path d="M1019.600 76.400l3.400 2.200l-3.400 2.200z" stroke="none" fill="#a060c0" stroke-width="0.6" />
<path d="M1016.600 81.200l1.400 1.400l1.600-.400" stroke="#2b6cc4" fill="none" stroke-width="0.6" />
<path d="M1018.400 89.400l0 7l1.800-1.600l1.400 3l1-.500l-1.400-2.900l2.400-.200z" stroke="#444" fill="#fff" stroke-width="0.5" />
<path d="M159.4 119.2v4.2h4.4" stroke="#444" fill="none" stroke-width="1.1" />
<path d="M460.400 123.600l3.200-3l3.200 3v2.400h-6.400zM460.400 126.200h6.400v3.300h-6.400z" stroke="#a0a0a0" fill="#fff" stroke-width="0.55" />
<path d="M555.6 114.2h5.6v1.6l-2.8 2.6l-2.8-2.6z" stroke="#a8a8a8" fill="#fff" stroke-width="0.5" />
<path d="M771.2 125.4v-2l2.8-2.6l2.8 2.6v2z" stroke="#a8a8a8" fill="#fff" stroke-width="0.5" />
<path d="M450 173.2h13.6v-13.4" stroke="#c4c4c4" fill="none" stroke-width="0.6" />
<path d="M788.6 173.2h-13.3v-13.400" stroke="#c4c4c4" fill="none" stroke-width="0.6" />
<path d="M129.48 124.32h3.84l-1.92 2.16z" fill="#666"/>
<path d="M139.2 123l4.6 4.6M143.8 123l-4.6 4.6" stroke="#444" fill="none" stroke-width="0.9" />
<circle cx="128.6" cy="144.6" r="2" fill="none" stroke="#2b579a" stroke-width="0.9"/>
<path d="M127.2 146.2l-3 3" stroke="#2b579a" fill="none" stroke-width="1.1" />
<path d="M135.40 145.08h2.4l-1.20 1.44z" fill="#666"/>
<path d="M73.4 182.6h3.6M73.6 185.8l1.6-1.8l1.6 1.8z" stroke="#555" fill="#555" stroke-width="0.5" />
<path d="M13.4 204.6v3.2h-3.2z" stroke="none" fill="#555" stroke-width="0.6" />
<rect x="7.3" y="550.4" width="1.4" height="1.2" fill="#fff"/>
<path d="M10.7 551.0L19.2 551.0" stroke="#fff" stroke-width="1.5" fill="none"/>
<rect x="9.6" y="554.75" width="1.4" height="1.2" fill="#fff"/>
<path d="M12.8 555.35L19.2 555.35" stroke="#fff" stroke-width="1.5" fill="none"/>
<rect x="7.3" y="559.1" width="1.4" height="1.2" fill="#fff"/>
<path d="M10.7 559.7L19.2 559.7" stroke="#fff" stroke-width="1.5" fill="none"/>
<path d="M1072.12 118.98h3.9599999999999995l-1.98 -2.16z" fill="#555"/>
<path d="M1072.12 590.22h3.9599999999999995l-1.98 2.16z" fill="#555"/>
<path d="M258.6 599.6h5v6h-5zM259.6 598.6v1.6M262.6 598.6v1.6M259.6 601.6h3M259.6 603.4h3" stroke="#555" fill="none" stroke-width="0.5" />
<path d="M918 599.8h3.4v5.6h-3.4zM922.4 599.8h3.4v5.6h-3.4zM918.8 601.4h1.8M918.8 603h1.8M923.2 601.4h1.8M923.2 603h1.8" stroke="#666" fill="none" stroke-width="0.5" />
<path d="M940.4 599.4h7.6v6.8h-7.6zM941.6 601.4h5.2M941.6 603h5.2M941.6 604.6h5.2" stroke="#555" fill="none" stroke-width="0.55" />
<path d="M961.6 599.6h7v5h-7zM962.6 601.2h3.4M962.6 602.8h2.4" stroke="#666" fill="none" stroke-width="0.5" />
<circle cx="968" cy="604.8" r="1.7" fill="#f3f3f3" stroke="#666" stroke-width="0.5"/>
<path d="M979 602.9L982 602.9" stroke="#555" stroke-width="0.7" fill="none"/>
<path d="M985 602.9L1040.4 602.9" stroke="#9a9a9a" stroke-width="0.5" fill="none"/>
<path d="M1043.6 602.9h3.4M1045.3 601.2v3.4" stroke="#555" fill="none" stroke-width="0.7" />
<g fill="#fff"><path d="M8.8 617.3l3.6-.5v3.5h-3.6zM13 616.7l4.6-.7v4.3h-4.6zM8.8 620.9h3.6v3.5l-3.6-.5zM13 620.9h4.6v4.3l-4.6-.7z"/></g>
<circle cx="41.8" cy="618.8" r="2.7" fill="none" stroke="#fff" stroke-width="0.8"/>
<path d="M39.9 620.8l-3.6 3.8" stroke="#fff" fill="none" stroke-width="0.9" />
<path d="M63.8 617.6h5.4v5.8h-5.400zM63.8 619.200h5.400M63.8 621.800h5.400" stroke="#fff" fill="none" stroke-width="0.8" />
<path d="M71.200 617.800v1.600M71.200 620v1.600M71.200 622.200v1.200" stroke="#fff" fill="none" stroke-width="1" />
<path d="M96.64 621.10h1.92l-0.96 -1.2z" fill="#888"/>
<g><circle cx="88.2" cy="620.6" r="3.5" fill="none" stroke="#2a9df4" stroke-width="1.7"/><rect x="86" y="620" width="6.6" height="1.2" fill="#2a9df4"/><rect x="89.6" y="621.2" width="3" height="1.6" fill="#f1f1f1"/><path d="M83.6 624.4c-1.4-3.6 3-9.4 9.6-9.6" stroke="#f2c12e" stroke-width="0.8" fill="none"/></g>
<defs><linearGradient id="edg" x1="0" y1="0" x2="1" y2="1"><stop offset="0" stop-color="#35c1f1"/><stop offset="0.5" stop-color="#1b9de2"/><stop offset="1" stop-color="#0c59a4"/></linearGradient></defs>
<circle cx="221" cy="620.400" r="7" fill="url(#edg)"/><path d="M214.100 619.800a7 7 0 0 1 13.800 0c.300 2-1 3.200-2.600 3.200h-4.400c0-1.400.800-2.600 2.200-2.800c-1.400-2-6.400-2.600-9 -.400z" fill="#58d26a" opacity="0.950"/><path d="M216.400 623a4.600 4.600 0 0 1 4.500-5.400c-1.500 1-2.300 2.600-2 4.600c.400 2.400 2.800 4 6 3.200a6 6 0 0 1-8.500-2.400z" fill="#0b4f9a"/>
<path d="M242.2 616.6h4l1.2 1.4h7v1.6h-12.2z" stroke="none" fill="#e8a33a" stroke-width="0.6" />
<path d="M242.2 618.6h12.2v7.6h-12.2z" stroke="none" fill="#f9d562" stroke-width="0.6" />
<path d="M245.2 622.6h6.2v3.6h-6.2z" stroke="none" fill="#3c8ed8" stroke-width="0.6" />
<path d="M246.6 624h3.4v2.2h-3.4z" stroke="none" fill="#f9d562" stroke-width="0.6" />
<rect x="269.6" y="614.6" width="12.4" height="12.4" rx="2" fill="#1f6ff2"/>
<path d="M271.4 623.2l2.800-4.200l1.700 2.100l1.900-2.700l3 4.800h-2.400l-1-1.500l-1 1.500h-1.800l-.800-1.200l-.800 1.200z" stroke="none" fill="#fff" stroke-width="0.6" />
<rect x="302" y="614.800" width="7.600" height="10.800" rx="0.600" fill="#fff"/><path d="M304.600 617h4M304.600 619.100h4M304.600 621.200h4M304.600 623.300h4" stroke="#2b579a" stroke-width="0.700"/><rect x="296.800" y="616.200" width="7.400" height="8.200" rx="0.500" fill="#2b579a"/>
<text x="300.5" y="622.3" font-size="5.6" fill="#fff" text-anchor="middle" font-weight="bold">W</text>
<rect x="856" y="616.200" width="5.200" height="8.400" rx="0.800" fill="#52c832"/><rect x="857.500" y="615.400" width="2.200" height="1.200" fill="#cfeec4"/><path d="M859.4 617.6l-1.8 3.2h1.4l-.6 2.8l2-3.6h-1.4z" fill="#fff"/>
<path d="M870.4 616.4l3.6-1l3.6 1v4c0 2.6-1.8 4.4-3.6 5.2c-1.8-.8-3.6-2.6-3.6-5.2z" stroke="none" fill="#fff" stroke-width="0.6" />
<path d="M870.4 616.4l3.6-1v10.2c-1.8-.8-3.6-2.6-3.6-5.2z" stroke="none" fill="#9aa0a6" stroke-width="0.6" />
<path d="M877.6 620.4l3 5.2h-6z" stroke="none" fill="#f7c325" stroke-width="0.6" />
<circle cx="888" cy="620.6" r="4.8" fill="#e7d21c"/><circle cx="888" cy="620.6" r="3" fill="#3fae2a"/><path d="M885.6 620.6h4.8" stroke="#e7d21c" stroke-width="1"/>
<rect x="897.2" y="616.6" width="8.2" height="8" rx="1" fill="#1f6ff2"/><path d="M898.4 622.4c0-1 .6-1.6 1.2-1.6c.4-1 1-1.2 1.6-.8c.6-.6 1.2-.4 1.6.2c.8-.2 1.4.4 1.4 1.2v1h-1.2l-1-1.2l-1 1.2h-1l-.8-1l-.4 1z" fill="#fff"/>
<path d="M913 618h4v7.6h-4zM914 616h2v2h-2z" stroke="#fff" fill="none" stroke-width="0.6" />
<path d="M917 619.6l1.4 1.2v3.6" stroke="#fff" fill="none" stroke-width="0.5" />
<path d="M923.6 620.6l5.2-3.8v7.6z" stroke="none" fill="#e9674b" stroke-width="0.6" />
<path d="M930.4 618.4v4.4" stroke="#7a2f28" fill="none" stroke-width="0.7" />
<path d="M938 617h8.4v5.2h-8.4zM936.6 617.2l2 3M940 624.6h5M942.4 622.2v2.4" stroke="#fff" fill="none" stroke-width="0.7" />
<rect x="953.4" y="615.4" width="3.4" height="6.4" rx="1.6" fill="#fff"/>
<path d="M952 620.4a3.2 3.2 0 0 0 6.4 0M955.2 623.6v1.8M953.4 625.6h3.6" stroke="#fff" fill="none" stroke-width="0.7" />
<path d="M964 619.2h1.6l2.2-2v7l-2.2-2h-1.6z" stroke="none" fill="#fff" stroke-width="0.6" />
<path d="M969.4 618.6a3 3 0 0 1 0 4.2M970.8 617.2a5 5 0 0 1 0 7" stroke="#fff" fill="none" stroke-width="0.55" />
<rect x="993.2" y="615.8" width="9.6" height="9.6" rx="1.8" fill="#f0572a" transform="rotate(-8 998 620.6)"/>
<text x="998" y="623.6" font-size="8.4" fill="#fff" text-anchor="middle" font-weight="bold" font-style="italic">S</text>
<path d="M1056.4 616.6h8v6h-2.4v2l-2-2h-3.6z" stroke="none" fill="#fff" stroke-width="0.6" />
<path d="M1057.6 618.4h5.6M1057.6 620.2h5.6" stroke="#1b2a3b" fill="none" stroke-width="0.5" />
<rect x="1" y="642.4" width="9.6" height="7.2" rx="1.2" fill="#fff"/><path d="M3.4 647.6c.4-2 1.6-3 3-3v-1l2.4 2l-2.4 2v-1c-1.2 0-2.2.2-3 1z" fill="#1b1d1f"/><rect x="3.4" y="650.2" width="4.8" height="1.2" fill="#fff"/>
<rect x="16.4" y="642" width="3.8" height="6.4" rx="1.9" fill="#fff"/>
<path d="M14.8 646.4a3.5 3.5 0 0 0 7 0M18.3 650v1.6M16.4 651.8h3.8" stroke="#fff" fill="none" stroke-width="0.8" />
<path d="M12.4 29.6h8.2v8h-8.2zM14.6 37.6v-2.6h3.8v2.6" stroke="#fff" fill="none" stroke-width="0.8" />
<path d="M12.4 32h8.2v1.8h-8.2z" stroke="none" fill="#fff" stroke-width="0.6" />
<path d="M29.6 29.4h4l2.2 2.2v6.2h-6.2zM33.6 29.4v2.2h2.2" stroke="#fff" fill="none" stroke-width="0.7" />
<path d="M45.6 29.4h4l2.2 2.2v6.2h-6.2zM49.6 29.4v2.2h2.2" stroke="#fff" fill="none" stroke-width="0.7" />
<circle cx="49.6" cy="34.8" r="1.6" fill="#2b579a" stroke="#fff" stroke-width="0.6"/>
<path d="M50.8 36l1.6 1.6" stroke="#fff" fill="none" stroke-width="0.7" />
<path d="M62.4 32.4h4.2a2.6 2.6 0 0 1 0 5.2h-1M64.6 30.2l-2.4 2.2l2.4 2.2" stroke="#7f9bc7" fill="none" stroke-width="0.8" />
<path d="M72.40 33.28h2.4l-1.20 1.44z" fill="#7f9bc7"/>
<path d="M87.2 31.4a3.4 3.4 0 1 1-3-1.2M85.6 29l1.8 2.2l-2.6.8" stroke="#7f9bc7" fill="none" stroke-width="0.8" />
<path d="M97.6 30.6h6v7h-6zM97.6 33h6M100 33v4.6" stroke="#fff" fill="none" stroke-width="0.7" />
<path d="M102 32.6l3.4-3.6l1 1l-3.4 3.6z" stroke="none" fill="#fff" stroke-width="0.6" />
<path d="M113.4 31h3l1 1.2h4.4v1.2h-6.4l-2 4zM115.8 33.8h7.4l-2 4h-7.4z" stroke="none" fill="#fff" stroke-width="0.6" />
<path d="M132 33.4L135.2 33.4" stroke="#fff" stroke-width="0.6" fill="none"/>
<path d="M132.16 34.76h2.88l-1.44 1.68z" fill="#fff"/>
<circle cx="20.2" cy="39" r="5" fill="none" stroke="#d8303f" stroke-width="0.5" opacity="0.75"/><circle cx="20.2" cy="39" r="2.7" fill="#dc4450"/>
<path d="M323.8 50.2a2.6 2.6 0 1 1 5.2 0c0 1.4-1.2 2-1.2 3.2h-2.8c0-1.2-1.2-1.8-1.2-3.2zM325.2 54.6h2.4M325.4 55.8h2" stroke="#e8eef8" fill="none" stroke-width="0.6" />
<path d="M985.2 31.2h6.4v5h-6.4zM985.2 32.6h6.4" stroke="#fff" fill="none" stroke-width="0.7" />
<path d="M988.4 33.6v2.2M987.4 34.6l1-1l1 1" stroke="#fff" fill="none" stroke-width="0.5" />
<path d="M1011 33.8L1016.6 33.8" stroke="#fff" stroke-width="0.7" fill="none"/>
<path d="M1037.6 32.6h4.2v4.2h-4.2zM1038.8 32.6v-1.2h4.2v4.2h-1.2" stroke="#fff" fill="none" stroke-width="0.7" />
<path d="M1063.4 31.2l5.2 5.2M1068.6 31.2l-5.2 5.2" stroke="#fff" fill="none" stroke-width="0.8" />
<circle cx="1044.6" cy="49.6" r="2.3" fill="none" stroke="#fff" stroke-width="0.8"/>
<path d="M1040.6 55.6c.6-3 2-3.8 4-3.8s3.4.8 4 3.8" stroke="#fff" fill="none" stroke-width="0.8" />
<path d="M1046.6 54h3.4M1048.3 52.3v3.4" stroke="#fff" fill="none" stroke-width="0.7" />
<defs><radialGradient id="gg"><stop offset="0.55" stop-color="#ffffff"/><stop offset="1" stop-color="#dff5e3"/></radialGradient></defs>
<circle cx="1028.6" cy="316.2" r="18" fill="#ededed" opacity="0.8"/>
<circle cx="1028.6" cy="316.2" r="16.8" fill="url(#gg)" stroke="#8fe0a0" stroke-width="0.9"/>
<path d="M1028.60 299.60A16.6 16.6 0 0 1 1036.65 330.72" stroke="#3fd560" stroke-width="2.4" fill="none"/>
<text x="1017.4" y="317.6" font-size="12.6" fill="#444" text-anchor="start" font-weight="300" letter-spacing="-0.3">42</text>
<text x="1031.8" y="317.6" font-size="6.6" fill="#444" text-anchor="start" >%</text>
<text x="1021" y="326.8" font-size="5.2" fill="#444" text-anchor="start" >102K/s</text>
<path d="M1018.8 327v-4.4M1017.6 323.8l1.2-1.4l1.2 1.4" stroke="#2a8cf0" fill="none" stroke-width="0.7" />
<defs><filter id="pb" x="-10%" y="-10%" width="120%" height="120%"><feGaussianBlur stdDeviation="4.5"/></filter><filter id="pm" x="-10%" y="-10%" width="120%" height="120%"><feGaussianBlur stdDeviation="1.8"/></filter><filter id="pn" x="0" y="0" width="100%" height="100%"><feTurbulence type="fractalNoise" baseFrequency="0.22" numOctaves="2" seed="7"/><feColorMatrix values="0 0 0 0 0.1  0 0 0 0 0.1  0 0 0 0 0.1  1.2 1.2 0 0 -0.95"/></filter><linearGradient id="pmg" x1="0" y1="0" x2="0" y2="1"><stop offset="0.45" stop-color="#000"/><stop offset="0.7" stop-color="#fff"/></linearGradient><mask id="pmk"><rect x="0" y="0" width="359.5" height="219.2" fill="url(#pmg)"/></mask><clipPath id="pc"><rect x="0" y="0" width="359.5" height="219.2"/></clipPath></defs>
<svg x="464.5" y="174.5" width="359.5" height="219.2" viewBox="0 0 359.5 219.2" overflow="hidden"><g clip-path="url(#pc)"><g filter="url(#pb)"><rect x="-30" y="-30" width="419.5" height="279.2" fill="#fdfdff"/><polygon points="177.8,-11.6 374.3,-11.6 374.3,100.7 262.0,100.7 191.9,86.6 128.7,62.1 149.8,27.0" fill="#d3d4ec" opacity="1"/><polygon points="100.7,79.6 191.9,65.6 311.1,79.6 311.1,111.2 191.9,107.7 100.7,111.2" fill="#e4deee" opacity="0.9"/><polygon points="135.7,-11.6 374.3,-11.6 374.3,5.3 135.7,5.3" fill="#f6f6fd" opacity="0.85"/><ellipse cx="205.9" cy="28.8" rx="42.1" ry="14.7" fill="#9299c8" opacity="0.85" transform="rotate(-12 205.9 28.8)"/><ellipse cx="160.3" cy="30.5" rx="21.0" ry="5.6" fill="#8d95c6" opacity="0.8" transform="rotate(-40 160.3 30.5)"/><ellipse cx="95.4" cy="50.9" rx="16.8" ry="6.0" fill="#8fa2e2" opacity="0.95" transform="rotate(-12 95.4 50.9)"/><ellipse cx="286.6" cy="16.5" rx="45.6" ry="10.5" fill="#e6e6f6" opacity="0.9" transform="rotate(-5 286.6 16.5)"/><ellipse cx="276.0" cy="55.1" rx="87.7" ry="13.3" fill="#f6f4fc" opacity="0.95" transform="rotate(-32 276.0 55.1)"/><ellipse cx="118.2" cy="76.1" rx="70.2" ry="17.5" fill="#fbfaff" opacity="0.9" transform="rotate(-15 118.2 76.1)"/><ellipse cx="332.2" cy="65.6" rx="28.1" ry="38.6" fill="#dfc6c4" opacity="0.95"/><ellipse cx="333.9" cy="76.8" rx="17.5" ry="14.0" fill="#969c8a" opacity="0.9"/><polygon points="-15.1,114.7 86.6,105.9 177.8,100.7 248.0,98.9 374.3,91.9 374.3,241.0 -15.1,241.0" fill="#9a8072" opacity="1"/><polygon points="-15.1,100.7 83.1,97.2 79.6,118.2 37.5,128.7 -15.1,130.5" fill="#e9e2e4" opacity="0.9"/><ellipse cx="37.5" cy="134.0" rx="45.6" ry="12.3" fill="#b8a498" opacity="0.9"/><ellipse cx="304.1" cy="104.9" rx="56.1" ry="10.5" fill="#a5826a" opacity="0.95"/><ellipse cx="342.7" cy="123.5" rx="14.0" ry="12.3" fill="#5c4034" opacity="0.9"/><polygon points="-15.1,153.3 86.6,146.3 205.9,160.3 374.3,142.8 374.3,241.0 -15.1,241.0" fill="#4a3f36" opacity="1"/><polygon points="219.9,153.3 374.3,144.5 374.3,241.0 219.9,241.0" fill="#35382f" opacity="1"/><ellipse cx="44.5" cy="160.3" rx="42.1" ry="14.0" fill="#6c584a" opacity="0.9"/><ellipse cx="30.5" cy="209.4" rx="49.1" ry="14.0" fill="#3a322a" opacity="0.95"/><ellipse cx="297.1" cy="202.4" rx="77.2" ry="21.0" fill="#2e3029" opacity="0.95"/><polygon points="-15.1,205.9 374.3,205.9 374.3,241.0 -15.1,241.0" fill="#2f2b2d" opacity="0.9"/><ellipse cx="311.1" cy="135.7" rx="31.6" ry="8.8" fill="#4a5a38" opacity="0.7" transform="rotate(8 311.1 135.7)"/></g><g filter="url(#pm)"><polygon points="81.4,116.5 100.7,97.9 135.7,90.8 149.8,108.4 144.5,130.5 111.2,147.0 90.1,142.8" fill="#33372e" opacity="1"/><polygon points="125.2,118.9 177.8,108.4 214.7,118.9 235.7,142.8 226.9,154.0 177.8,136.4 135.7,144.5 118.2,135.7" fill="#2d3930" opacity="1"/><polygon points="181.3,104.9 219.9,102.8 283.1,115.4 311.1,125.9 346.2,140.0 349.7,147.0 304.1,150.5 262.0,147.0 237.5,150.5 219.9,129.4 191.9,115.4" fill="#34413a" opacity="1"/><polygon points="149.8,149.8 177.8,136.4 205.9,146.3 226.9,160.3 221.7,177.8 241.0,191.9 263.8,206.6 241.0,210.1 205.9,192.6 184.8,178.5 160.3,171.5" fill="#b4826c" opacity="1"/><polygon points="167.3,140.0 191.9,134.3 226.9,153.3 223.4,164.5 191.9,157.5 170.8,150.5" fill="#bf3f38" opacity="1"/><ellipse cx="123.5" cy="167.3" rx="21.0" ry="22.4" fill="#2b2f35" opacity="1"/><ellipse cx="163.8" cy="192.6" rx="20.3" ry="16.8" fill="#131317" opacity="1"/><polygon points="27.0,186.6 65.6,177.1 73.3,186.6 38.2,201.3" fill="#8a4434" opacity="1"/><polygon points="62.1,218.9 79.6,192.6 100.7,186.6 102.4,199.6 81.4,219.9" fill="#b08a6c" opacity="1"/><ellipse cx="94.4" cy="187.0" rx="11.9" ry="4.9" fill="#d8d0ca" opacity="0.85" transform="rotate(15 94.4 187.0)"/><polygon points="70.9,142.8 83.1,139.2 87.3,160.3 77.9,163.8" fill="#23262c" opacity="1"/><ellipse cx="155.0" cy="128.7" rx="9.8" ry="3.5" fill="#d8c23a" opacity="0.9" transform="rotate(-8 155.0 128.7)"/></g><rect x="0" y="0" width="359.5" height="219.2" filter="url(#pn)" opacity="0.3" mask="url(#pmk)"/><rect x="354.7" y="0" width="4.8" height="219.2" fill="#1a1d38"/></g></svg>
<text x="718.2" y="385.3" font-size="11.5" fill="#f6f6f6" text-anchor="start" opacity="0.97">企鹅号 大可观天下</text>
<g fill="#f2f2f2" opacity="0.9"><ellipse cx="704.8" cy="379.6" rx="3.6" ry="4.6"/><ellipse cx="704.8" cy="384.6" rx="5" ry="1.6"/></g>
<g><rect x="1101.3" y="85" width="2.8" height="5.6" rx="1.4" fill="#8a8c90"/><path d="M1099.9 89.2a2.8 2.8 0 0 0 5.6 0M1102.7 92.2v1.6M1101 94h3.4" stroke="#8a8c90" stroke-width="0.7" fill="none"/><path d="M1098.300 94.400l9-9.200" stroke="#c44a40" stroke-width="1.100"/></g>
<g fill="#4c4e52" opacity="0.85"><path d="M1226 90l8-8l6 6l-8 8zM1238 90l6-6l6 6l-6 6z"/></g>
<path d="M1252 89.6l4.6-4v2.4c3.4 0 5.4 1.8 5.8 5.2c-1.2-1.8-3-2.6-5.8-2.6v2.6z" stroke="none" fill="#b4b4b6" stroke-width="0.6" />
<defs><clipPath id="vc"><rect x="1086.6000000000001" y="280.2" width="173.2" height="96.39999999999999" rx="1"/></clipPath><filter id="vb"><feGaussianBlur stdDeviation="0.65"/></filter><linearGradient id="wall" x1="0" x2="1" y1="0" y2="0"><stop offset="0" stop-color="#ccd0ce"/><stop offset="0.07" stop-color="#c2c6c4"/><stop offset="0.3" stop-color="#c9cdcb"/><stop offset="0.6" stop-color="#cfd3d1"/><stop offset="1" stop-color="#d1d5d3"/></linearGradient></defs>
<rect x="1085.2" y="278.8" width="176.0" height="99.19999999999999" rx="2" fill="#1aa96b"/>
<g clip-path="url(#vc)"><rect x="1085.2" y="278.8" width="176.0" height="99.19999999999999" fill="url(#wall)"/><g filter="url(#vb)"><rect x="1123" y="278" width="136.400" height="10.900" fill="#2c1712"/><rect x="1126.600" y="278" width="132.800" height="6.200" fill="#c4c4b6"/><path d="M1131.500 380l2-6c2-6 6-11 12-15.500l10-6.500l8-3h24l7 2.500c5 3 9 7 12.500 13c2.500 5 5 10 7 15.500z" fill="#121315"/><path d="M1158 338c0-11 7-17 16.800-17s16.800 6 16.800 17c0 10-4 19-9.500 24.500c-4 3.500-10.600 3.500-14.600 0c-5.500-5.500-9.500-14.500-9.500-24.500z" fill="#b8906f"/><path d="M1161.500 352c2.500 8 7 13.500 13.300 13.500s10.800-5.500 13.300-13.500c-3.500 4-7.500 5.500-13.300 5.500s-9.800-1.500-13.300-5.500z" fill="#8a6350" opacity="0.750"/><path d="M1166 361l5 11h8l5-11c-4 5-14 5-18 0z" fill="#97705a"/><path d="M1154.800 340c-3.500-16 6-27 20-27c14.500 0 23.500 10.500 20 27l-2.800-1c.300-7-1.500-11-4.500-13c-8 2.500-18 2.500-25.400 0c-3 2-4.800 6-4.500 13z" fill="#131315"/><path d="M1158.500 342.800h33" stroke="#7a6a5e" stroke-width="0.700" opacity="0.900"/><path d="M1163.300 343h8.600M1178 343h9" stroke="#4a3ee0" stroke-width="1.600" opacity="0.850"/><path d="M1170.500 357.500c2.500 1 6 1 8.500 0" stroke="#6a4036" stroke-width="1.300" fill="none"/></g><path d="M1086 362h41.800a2 2 0 0 1 2 2v14h-43.800z" fill="#3a3c3e" opacity="0.86"/><path d="M1086 363.600l12.400-2.400l2 16.800h-14.400z" fill="#1d1e20" opacity="0.9"/></g>
<rect x="1093" y="365" width="3.600" height="6" rx="1.800" fill="#fff"/>
<path d="M1091.6 369.4a3.200 3.200 0 0 0 6.400 0M1094.8 372.600v1.600M1093 374.400h3.600" stroke="#fff" fill="none" stroke-width="0.8" />
<text x="1103.2" y="372.9" font-size="8.1" fill="#fff" text-anchor="start" font-weight="bold">马春峰</text>
</svg>
</div></body></html>
